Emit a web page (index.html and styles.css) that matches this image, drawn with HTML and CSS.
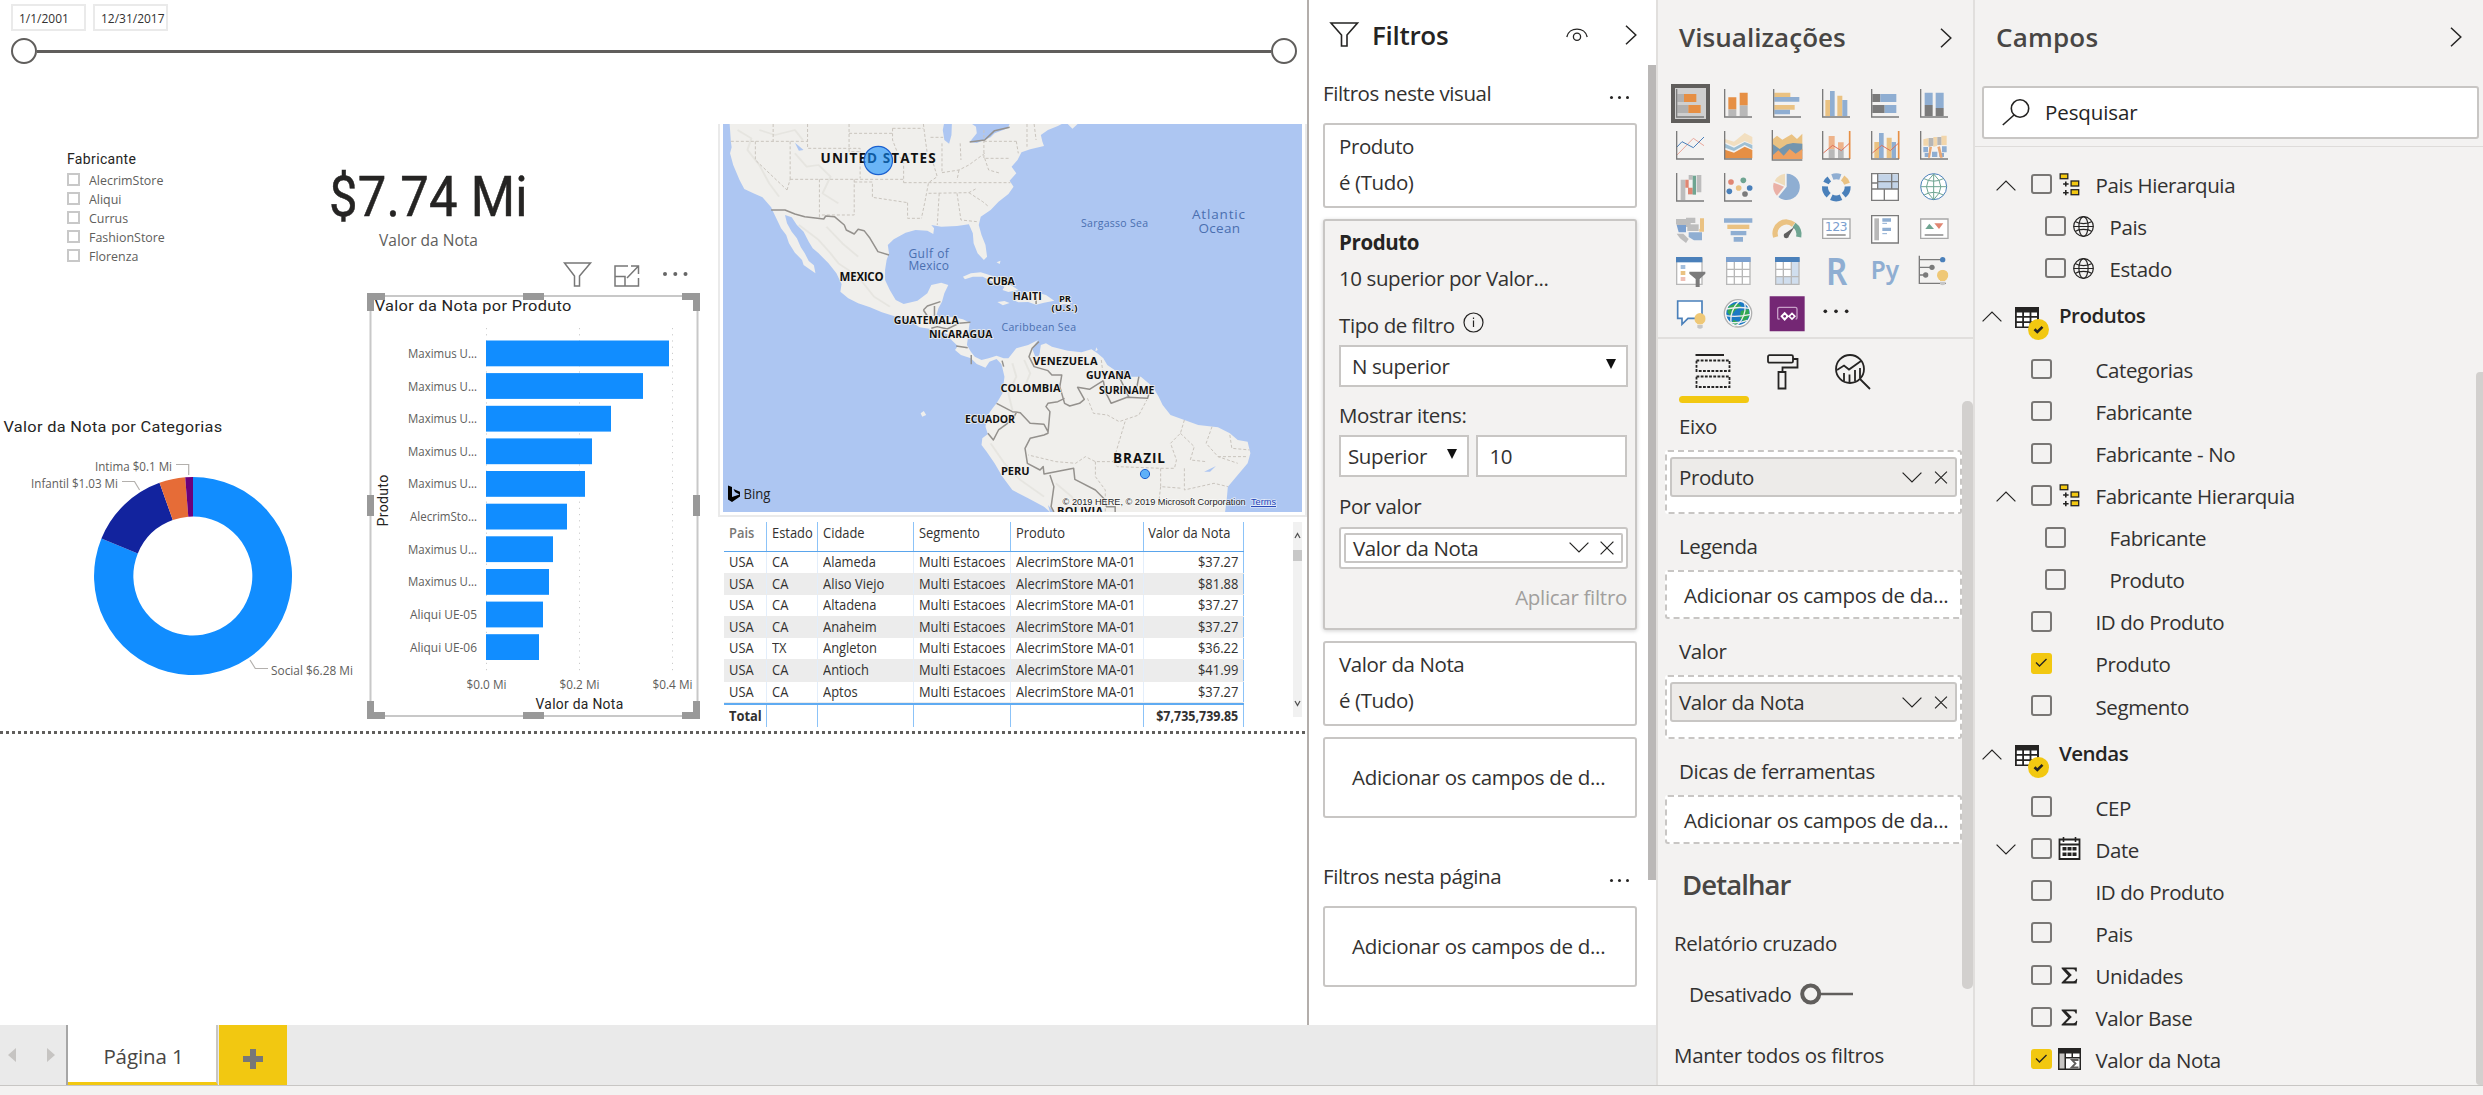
FILE: index.html
```html
<!DOCTYPE html>
<html lang="pt-BR">
<head>
<meta charset="utf-8">
<title>Relatório</title>
<link rel="stylesheet" href="styles.css">
</head>
<body>
<svg class="defs" width="0" height="0" aria-hidden="true">
  <symbol id="chev-right" viewBox="0 0 12 20"><path d="M1 .8 10.8 10 1 19.2" fill="none" stroke="#252423" stroke-width="1.5"/></symbol>
  <symbol id="chev-down" viewBox="0 0 20 11"><path d="M.6.6 10 10 19.400 .6" fill="none" stroke="#252423" stroke-width="1.2"/></symbol>
  <symbol id="chev-up" viewBox="0 0 20 11"><path d="M.6 10.400 10 1 19.400 10.400" fill="none" stroke="#252423" stroke-width="1.2"/></symbol>
  <symbol id="cross" viewBox="0 0 14 14"><path d="M.6.6 13.400 13.400M13.400.6.6 13.400" fill="none" stroke="#252423" stroke-width="1.2"/></symbol>
  <symbol id="tri" viewBox="0 0 10 10"><path d="M0 0H10L5 10Z" fill="#111"/></symbol>
  <symbol id="hier" viewBox="0 0 20 23">
    <g fill="#f2c811" stroke="#252423" stroke-width="1.300"><rect x=".7" y=".9" width="7.600" height="4.800"/><rect x="11.600" y="8" width="7.600" height="5"/><rect x="11.600" y="16.700" width="7.600" height="5"/></g>
    <path d="M3.600 11h5.500M6.300 8.400v5.200M3.600 19.700h5.500M6.300 17.100v5.200" stroke="#252423" stroke-width="1.600"/>
  </symbol>
  <symbol id="globe" viewBox="0 0 21 21"><g fill="none" stroke="#252423" stroke-width="1.200"><circle cx="10.500" cy="10.500" r="9.800"/><ellipse cx="10.500" cy="10.500" rx="4.600" ry="9.800"/><path d="M2 5.600c4 2.600 13 2.600 17 0M.8 10.500h19.400M2 15.400c4-2.600 13-2.600 17 0"/></g></symbol>
  <symbol id="sigma" viewBox="0 0 17 17"><path d="M.6.6H15.800V4.500L14.600 4.500C14.200 3 13.600 2.300 12 2.300H5.200L10.800 8 4.600 14.300H12.300C14 14.300 14.800 13.400 15.300 11.800L16.300 12 15.600 16.400H.6V15.400L7.200 8.700.6 1.600Z" fill="#252423"/></symbol>
  <symbol id="table" viewBox="0 0 24 21"><rect width="24" height="21" fill="#252423"/><g fill="#fff"><path d="M1.800 5.500h5.400v3.500h-5.400zM9 5.500h5.600v3.500h-5.600zM16.400 5.500h5.600v3.500h-5.600zM1.800 10.700h5.400v3.500h-5.400zM9 10.700h5.600v3.500h-5.600zM16.400 10.700h5.600v3.500h-5.600zM1.800 15.900h5.400v3.500h-5.400zM9 15.900h5.600v3.500h-5.600zM16.400 15.900h5.600v3.500h-5.600z"/></g></symbol>
  <symbol id="badge" viewBox="0 0 21 21"><circle cx="10.500" cy="10.500" r="10.500" fill="#f2c811"/><path d="M6.500 10.300 9.300 13 14.500 7.800" fill="none" stroke="#252423" stroke-width="2.600"/></symbol>
  <symbol id="bulb" viewBox="0 0 34 48"><circle cx="17" cy="17" r="17" fill="#efc876"/><path d="M9 30h16v4h-16z" fill="#efc876"/><path d="M9 36h16v8q-8 6-16 0z" fill="#c6c6c6"/></symbol>
</svg>

<div class="app">
  <div class="report">
    <main class="canvas">
      <div class="visual slicer-date">
        <div class="dates"><div class="date"><span class="cond">1/1/2001</span></div><div class="date"><span class="cond">12/31/2017</span></div></div>
        <div class="slider"><i class="knob"></i><i class="track"></i><i class="knob"></i></div>
      </div>

      <div class="visual slicer">
        <h4>Fabricante</h4>
        <label><i></i><span class="cond">AlecrimStore</span></label>
        <label><i></i><span class="cond">Aliqui</span></label>
        <label><i></i><span class="cond">Currus</span></label>
        <label><i></i><span class="cond">FashionStore</span></label>
        <label><i></i><span class="cond">Florenza</span></label>
      </div>

      <svg class="visual card-visual" viewBox="320 160 220 100" width="220" height="100">
        <text class="din big" x="329" y="216" textLength="199" lengthAdjust="spacingAndGlyphs">$7.74 Mi</text>
        <text class="lbl" x="379" y="246" font-size="15.500" textLength="99" lengthAdjust="spacingAndGlyphs">Valor da Nota</text>
      </svg>

      <svg class="visual donut" viewBox="0 410 366 300" width="366" height="300">
        <text class="din" x="3.500" y="432" font-size="15.500" textLength="219" lengthAdjust="spacingAndGlyphs">Valor da Nota por Categorias</text>
        <path d="M193 477A99 99 0 1 1 101.400 538.500L137.800 553.400A59.500 59.500 0 1 0 193 516.500Z" fill="#118dff"/>
        <path d="M101.400 538.500A99 99 0 0 1 159.500 482.800L172.800 520A59.500 59.500 0 0 0 137.800 553.400Z" fill="#12239e"/>
        <path d="M159.500 482.800A99 99 0 0 1 185.200 477.300L188.300 516.700A59.500 59.500 0 0 0 172.800 520Z" fill="#e66c37"/>
        <path d="M185.200 477.300A99 99 0 0 1 193 477V516.500A59.500 59.500 0 0 0 188.300 516.700Z" fill="#6b007b"/>
        <g fill="none" stroke="#b3b0ad" stroke-width="1.200"><path d="M176 464.500H188.700V475"/><path d="M122 481.500H134.500L139.600 490"/><path d="M250 660 255.300 668.500H268"/></g>
        <g class="lbl" font-size="12.500">
          <text x="95" y="471.300" textLength="77" lengthAdjust="spacingAndGlyphs">Intima $0.1 Mi</text>
          <text x="31" y="488.300" textLength="87" lengthAdjust="spacingAndGlyphs">Infantil $1.03 Mi</text>
          <text x="271" y="674.500" textLength="82" lengthAdjust="spacingAndGlyphs">Social $6.28 Mi</text>
        </g>
      </svg>

      <svg class="visual bars" viewBox="360 250 350 475" width="350" height="475">
        <g fill="none" stroke="#777" stroke-width="1.500">
          <path d="M564.500 263H590.500L579.500 276V286H574.500V276Z"/>
          <path d="M628 266H615V286H638.500V278M631 266H638.500V274M638 266.500 627 278M615 276.500H625V286"/>
        </g>
        <g fill="#666"><circle cx="665" cy="274" r="2"/><circle cx="675.300" cy="274" r="2"/><circle cx="685.500" cy="274" r="2"/></g>
        <rect x="370.500" y="296" width="327" height="420" fill="none" stroke="#c8c8c8" stroke-width="2"/>
        <text class="din" x="374.700" y="311" font-size="15.500" textLength="197" lengthAdjust="spacingAndGlyphs">Valor da Nota por Produto</text>
        <g fill="#999">
          <path d="M367 293H385V300H374V311H367ZM700 293H682V300H693V311H700ZM367 719H385V712H374V701H367ZM700 719H682V712H693V701H700Z"/>
          <rect x="523" y="293" width="21" height="7"/><rect x="523" y="712" width="21" height="7"/>
          <rect x="367" y="495" width="7" height="21"/><rect x="693" y="495" width="7" height="21"/>
        </g>
        <path d="M486.500 328V673M579.500 328V673M672.500 328V673" stroke="#ccc" stroke-dasharray="1.200 5" fill="none"/>
        <g fill="#118dff">
          <rect x="486" y="340.500" width="183" height="25.800"/><rect x="486" y="373.100" width="157" height="25.800"/>
          <rect x="486" y="405.800" width="125" height="25.800"/><rect x="486" y="438.400" width="106" height="25.800"/>
          <rect x="486" y="471" width="99" height="25.800"/><rect x="486" y="503.700" width="81" height="25.800"/>
          <rect x="486" y="536.300" width="67" height="25.800"/><rect x="486" y="569" width="63" height="25.800"/>
          <rect x="486" y="601.600" width="57" height="25.800"/><rect x="486" y="634.200" width="53" height="25.800"/>
        </g>
        <g class="lbl" font-size="12.500">
          <text x="408" y="358" textLength="69" lengthAdjust="spacingAndGlyphs">Maximus U...</text>
          <text x="408" y="390.500" textLength="69" lengthAdjust="spacingAndGlyphs">Maximus U...</text>
          <text x="408" y="423.200" textLength="69" lengthAdjust="spacingAndGlyphs">Maximus U...</text>
          <text x="408" y="456" textLength="69" lengthAdjust="spacingAndGlyphs">Maximus U...</text>
          <text x="408" y="488.400" textLength="69" lengthAdjust="spacingAndGlyphs">Maximus U...</text>
          <text x="410" y="521" textLength="67" lengthAdjust="spacingAndGlyphs">AlecrimSto...</text>
          <text x="408" y="553.600" textLength="69" lengthAdjust="spacingAndGlyphs">Maximus U...</text>
          <text x="408" y="586.300" textLength="69" lengthAdjust="spacingAndGlyphs">Maximus U...</text>
          <text x="410" y="619" textLength="67" lengthAdjust="spacingAndGlyphs">Aliqui UE-05</text>
          <text x="410" y="651.500" textLength="67" lengthAdjust="spacingAndGlyphs">Aliqui UE-06</text>
          <text x="466.500" y="689.300" textLength="40" lengthAdjust="spacingAndGlyphs">$0.0 Mi</text>
          <text x="559.500" y="689.300" textLength="40" lengthAdjust="spacingAndGlyphs">$0.2 Mi</text>
          <text x="652.500" y="689.300" textLength="40" lengthAdjust="spacingAndGlyphs">$0.4 Mi</text>
        </g>
        <text class="din" x="535.500" y="708.500" font-size="14" textLength="88" lengthAdjust="spacingAndGlyphs">Valor da Nota</text>
        <text class="din" transform="translate(388.400 526.500) rotate(-90)" font-size="14" textLength="52" lengthAdjust="spacingAndGlyphs">Produto</text>
      </svg>

      <div class="visual map">
      <svg viewBox="723 124 579 388" width="579" height="388">
        <rect x="723" y="124" width="579" height="388" fill="#adc6f2"/>
        <g transform="translate(700 110) scale(.3954 .3333)">
          <g fill="#f0efec">
            <path d="M75 42 78 94 80 112 76 130 84 165 100 210 112 237 135 250 158 262 180 292 185 305 195 330 205 355 218 375 225 400 240 428 258 450 262 465 280 480 292 490 288 466 275 453 265 430 255 412 245 385 232 365 220 340 215 315 232 322 245 345 262 365 275 395 285 415 300 430 325 460 345 490 358 522 355 545 375 565 400 580 430 592 460 607 490 618 510 622 535 635 555 652 580 656 605 665 625 672 636 690 652 708 645 720 660 735 685 745 700 762 722 773 732 755 750 747 762 762 765 775 770 800 765 850 750 880 740 895 725 920 722 950 728 972 714 985 712 1005 725 1025 745 1060 765 1100 790 1140 830 1165 870 1190 885 1206H1328L1332 1170 1335 1130 1360 1095 1385 1060 1392 1030 1385 995 1360 990 1340 970 1310 952 1260 945 1225 930 1190 915 1170 885 1160 860 1145 830 1115 800 1085 800 1055 785 1030 765 1020 745 1005 730 990 718 965 727 930 722 890 710 875 700 862 705 858 735 848 740 840 715 855 690 830 705 800 715 780 745 768 745 750 737 730 745 712 750 695 740 685 725 675 705 678 680 680 655 682 638 665 628 640 622 610 622 597 620 603 595 612 575 618 550 628 525 610 518 585 525 575 550 550 572 515 582 495 570 480 540 468 510 468 480 472 450 478 430 475 405 490 388 520 368 545 360 575 362 590 372 592 355 585 345 610 350 650 348 680 343 690 370 692 400 702 430 718 450 726 440 722 405 712 375 705 345 710 320 735 300 755 275 780 252 793 230 783 212 800 190 788 170 803 150 813 127 835 118 870 108 866 95 862 75 880 60 905 48 915 42ZM930 42H955L942 56Z"/>
            <path d="M665 500 685 490 710 487 740 498 765 512 790 528 805 540 780 546 765 540 770 530 745 518 715 500 690 500 670 508ZM790 568 812 566 818 545 850 547 875 555 896 572 870 578 850 584 830 576 805 577ZM752 576 770 573 783 579 766 586ZM910 575H936V583H910ZM750 457 760 452 758 462ZM1002 712 1006 720 1000 724ZM558 910 566 903 572 915 562 920Z"/>
          </g>
          <g fill="none" stroke="#e4e2dd" stroke-width="5" opacity=".8" stroke-linejoin="round">
            <path d="M95 60 130 85 120 120 150 165 175 220 200 260M150 60 190 75 240 60 260 90M240 130 270 170 300 165 330 200 310 250 350 280M250 345 300 390 330 430 350 460 400 500 440 560 480 590M320 350 360 400 400 440M790 760 800 800 780 850 790 900M735 1000 770 1060 810 1110 870 1160M820 750 835 790 815 850M900 1120 940 1160 960 1200"/>
          </g>
          <g fill="#adc6f2">
            <path d="M617 42H637L636 75 630 101 618 90 614 60ZM688 42H783L778 55 745 70 735 82 700 99 682 96 700 70 698 50ZM240 98 250 108 262 120 250 122ZM850 712 860 722 855 740 846 728ZM1275 1085 1305 1068 1290 1085ZM880 1185 895 1206H885Z"/>
          </g>
          <g fill="none" stroke="#c9c4bd" stroke-width="1" stroke-dasharray="3 2">
            <path vector-effect="non-scaling-stroke" d="M78 94H272M185 42V94M272 42V115H405V205M140 94V150L220 240M228 94V208M228 208H515M302 208V325M220 240 228 208M377 42V125H405M377 70H487M487 55H565M487 55V90L500 130 515 160V218M390 208V315H302M390 216H436V262L525 278M525 278V325H560M515 218H578M515 132H575L590 160 600 200 578 218 568 280 560 325M565 42 570 90 575 132M583 82H615M612 188 655 180 680 165 720 130M612 100V188M658 100 660 150M718 60V145H785M578 218H785M578 250 680 248 700 235M605 250 600 345M650 250 660 330 700 335M680 248 715 275 730 290M718 94H800M827 42V110M800 94 805 130M845 42 850 90M720 145 730 180 760 190M655 180 650 210"/>
            <path vector-effect="non-scaling-stroke" d="M980 865 995 910 1030 915 1060 935 1110 915 1130 870M1075 935 1045 1055H1000L975 1040 950 1060 900 1055 830 1035M1045 1055 1055 1070 1165 1075V1130L1220 1135M1225 930 1215 970 1190 1000 1205 1050 1200 1075 1165 1075M1215 970 1250 1010 1240 1050 1280 1055M1295 950 1280 1000 1310 1040 1360 1060M1310 1040 1385 1040M1000 1055V1100L1025 1140V1206M1165 1130 1160 1180M1340 975 1345 1015 1390 1020M1225 1075V1140L1300 1120 1335 1130M1015 750 1020 800"/>
          </g>
          <g fill="none" stroke="#94918d" stroke-width="1.500" stroke-linejoin="round">
            <path vector-effect="non-scaling-stroke" d="M180 300H215L240 312 265 320 313 327 318 318 340 320 365 345 370 360 390 372 400 358 415 362 430 385 450 425 478 435M682 96 720 90 745 62 783 52M565 600 575 588 608 575M593 588V618M565 600 575 618M585 655 600 650 625 657 655 640 684 637M648 708 677 713M686 735V763M764 752 768 770"/>
            <path vector-effect="non-scaling-stroke" d="M857 695 840 715 832 740 845 770 880 782 890 795H915L910 830 922 880 935 888 960 880 972 868 955 832 985 838 1020 812M1020 812 1025 845 1040 880 1080 862 1132 865 1140 835 1150 830M1060 800 1085 862M1110 800 1105 830M922 865 905 875 880 880 875 890 885 905 880 970 870 975M750 880 790 905 810 908 835 940 870 943 880 965M870 975 835 985 822 1015 828 1060 860 1080 868 1070 870 1092 945 1075 948 1108 1000 1140 1025 1170 1028 1190H1050V1206M728 970 742 990 755 960 790 930 800 908M885 1095 895 1130 888 1190 895 1206M850 560V582"/>
          </g>
        </g>
        <g class="sea">
          <text x="908.400" y="258" font-size="12" textLength="41">Gulf of</text><text x="908.400" y="270" font-size="12" textLength="41">Mexico</text>
          <text x="1081" y="227" font-size="10.500" textLength="67.500">Sargasso Sea</text>
          <text x="1192" y="219" font-size="13.500" textLength="53.500">Atlantic</text><text x="1198.500" y="233.300" font-size="13.500" textLength="42">Ocean</text>
          <text x="1001.500" y="331" font-size="10.500" textLength="75">Caribbean Sea</text>
        </g>
        <g class="land">
          <text x="820.600" y="162.700" font-size="13.500" textLength="115">UNITED STATES</text>
          <text x="839.600" y="281.300" font-size="11.500" textLength="44">MEXICO</text>
          <text x="986.700" y="285.300" font-size="10.500" textLength="28">CUBA</text>
          <text x="1012.800" y="300" font-size="10.500" textLength="29">HAITI</text>
          <text x="1059" y="301.700" font-size="9.500" textLength="12">PR</text>
          <text x="1051.500" y="311" font-size="9.500" textLength="26">(U.S.)</text>
          <text x="893.800" y="324" font-size="10.500" textLength="65">GUATEMALA</text>
          <text x="929" y="338.300" font-size="10.500" textLength="63.500">NICARAGUA</text>
          <text x="1033" y="365" font-size="11" textLength="64.500">VENEZUELA</text>
          <text x="1086" y="379.300" font-size="10.500" textLength="45">GUYANA</text>
          <text x="1099" y="393.500" font-size="10.500" textLength="55.500">SURINAME</text>
          <text x="1000.500" y="391.500" font-size="11" textLength="60">COLOMBIA</text>
          <text x="965" y="422.500" font-size="10.500" textLength="50">ECUADOR</text>
          <text x="1001" y="475" font-size="11" textLength="28.500">PERU</text>
          <text x="1113" y="463.300" font-size="13.500" textLength="52">BRAZIL</text>
          <text x="1057" y="514.500" font-size="11" textLength="46">BOLIVIA</text>
        </g>
        <circle cx="878.300" cy="160.500" r="14.200" fill="#118dff" fill-opacity=".6" stroke="#1b60cf" stroke-width="1.200"/>
        <circle cx="1145" cy="474" r="4.600" fill="#118dff" fill-opacity=".65" stroke="#1b60cf"/>
        <path d="M728 485.500 732 487V497L739.500 494.500 735 492 733.500 489 740 491.800V496.500L732 502 728 499.500Z" fill="#000"/>
        <text x="743.500" y="498.800" class="bing" textLength="27" lengthAdjust="spacingAndGlyphs">Bing</text>
        <text class="copy" x="1062.600" y="505" textLength="183" lengthAdjust="spacingAndGlyphs">© 2019 HERE, © 2019 Microsoft Corporation</text>
        <text class="copy terms" x="1251" y="505" textLength="25" lengthAdjust="spacingAndGlyphs">Terms</text>
      </svg>
      </div>

      <div class="visual grid">
        <div class="tbl">
          <div class="tr th"><b><span class="cond dim">Pais</span></b><b><span class="cond">Estado</span></b><b><span class="cond">Cidade</span></b><b><span class="cond">Segmento</span></b><b><span class="cond">Produto</span></b><b><span class="cond">Valor da Nota</span></b></div>
          <div class="tr"><b><span class="cond">USA</span></b><b><span class="cond">CA</span></b><b><span class="cond">Alameda</span></b><b><span class="cond">Multi Estacoes</span></b><b><span class="cond">AlecrimStore MA-01</span></b><b><span class="cond">$37.27</span></b></div>
          <div class="tr"><b><span class="cond">USA</span></b><b><span class="cond">CA</span></b><b><span class="cond">Aliso Viejo</span></b><b><span class="cond">Multi Estacoes</span></b><b><span class="cond">AlecrimStore MA-01</span></b><b><span class="cond">$81.88</span></b></div>
          <div class="tr"><b><span class="cond">USA</span></b><b><span class="cond">CA</span></b><b><span class="cond">Altadena</span></b><b><span class="cond">Multi Estacoes</span></b><b><span class="cond">AlecrimStore MA-01</span></b><b><span class="cond">$37.27</span></b></div>
          <div class="tr"><b><span class="cond">USA</span></b><b><span class="cond">CA</span></b><b><span class="cond">Anaheim</span></b><b><span class="cond">Multi Estacoes</span></b><b><span class="cond">AlecrimStore MA-01</span></b><b><span class="cond">$37.27</span></b></div>
          <div class="tr"><b><span class="cond">USA</span></b><b><span class="cond">TX</span></b><b><span class="cond">Angleton</span></b><b><span class="cond">Multi Estacoes</span></b><b><span class="cond">AlecrimStore MA-01</span></b><b><span class="cond">$36.22</span></b></div>
          <div class="tr"><b><span class="cond">USA</span></b><b><span class="cond">CA</span></b><b><span class="cond">Antioch</span></b><b><span class="cond">Multi Estacoes</span></b><b><span class="cond">AlecrimStore MA-01</span></b><b><span class="cond">$41.99</span></b></div>
          <div class="tr"><b><span class="cond">USA</span></b><b><span class="cond">CA</span></b><b><span class="cond">Aptos</span></b><b><span class="cond">Multi Estacoes</span></b><b><span class="cond">AlecrimStore MA-01</span></b><b><span class="cond">$37.27</span></b></div>
          <div class="tr total"><b><span class="cond">Total</span></b><b></b><b></b><b></b><b></b><b><span class="cond">$7,735,739.85</span></b></div>
        </div>
        <svg class="tscroll" width="9" height="195" viewBox="0 0 9 195"><rect width="9" height="195" fill="#f1f1f1"/><rect y="28" width="9" height="11" fill="#c8c8c8"/><path d="M2 16 4.500 11.500 7 16M2 179 4.500 183.500 7 179" fill="none" stroke="#555" stroke-width="1.300"/></svg>
      </div>
      <div class="visual page-edge"></div>
    </main>

    <aside class="filters">
      <header>
        <svg width="29" height="25" viewBox="0 0 29 25"><path d="M1 1H27.500L17 13V24H11.500V13Z" fill="none" stroke="#252423" stroke-width="1.600"/></svg>
        <h2>Filtros</h2>
        <svg class="eye" width="22" height="14" viewBox="0 0 22 14"><path d="M.8 9C3 -1.500 19 -1.500 21.200 9" fill="none" stroke="#252423" stroke-width="1.300"/><circle cx="11" cy="8.800" r="3.600" fill="none" stroke="#252423" stroke-width="1.300"/></svg>
        <svg width="12" height="20"><use href="#chev-right"/></svg>
      </header>
      <div class="sec"><span>Filtros neste visual</span><i class="dots"></i></div>
      <div class="fcard"><p>Produto</p><p>é (Tudo)</p></div>
      <div class="fcard open">
        <p class="strong">Produto</p><p>10 superior por Valor...</p>
        <p class="gap">Tipo de filtro <svg class="info" width="21" height="21" viewBox="0 0 21 21"><circle cx="10.500" cy="10.500" r="9.500" fill="none" stroke="#252423" stroke-width="1.200"/><path d="M10.500 8.500V15M10.500 5.500V7" stroke="#252423" stroke-width="1.200"/></svg></p>
        <div class="field"><span>N superior</span><svg width="10" height="10"><use href="#tri"/></svg></div>
        <p class="gap">Mostrar itens:</p>
        <div class="pair"><div class="field sm"><span>Superior</span><svg width="10" height="10"><use href="#tri"/></svg></div><div class="field num"><span>10</span></div></div>
        <p class="gap">Por valor</p>
        <div class="field well2"><div class="inner"><span>Valor da Nota</span><svg width="20" height="11"><use href="#chev-down"/></svg><svg width="14" height="14"><use href="#cross"/></svg></div></div>
        <p class="gap apply">Aplicar filtro</p>
      </div>
      <div class="fcard"><p>Valor da Nota</p><p>é (Tudo)</p></div>
      <div class="fcard drop">Adicionar os campos de d...</div>
      <div class="sec second"><span>Filtros nesta página</span><i class="dots"></i></div>
      <div class="fcard drop">Adicionar os campos de d...</div>
      <i class="fscroll"></i>
    </aside>

    <nav class="tabs">
      <div class="arrows"><svg width="48" height="14" viewBox="0 0 48 14"><path d="M8 0V14L0 7ZM39 0V14L47 7Z" fill="#c6c4c2"/></svg></div>
      <div class="tab">Página 1</div>
      <div class="plus"><svg width="20" height="20" viewBox="0 0 20 20"><path d="M10 0V20M0 10H20" stroke="#777" stroke-width="6"/></svg></div>
    </nav>
  </div>

  <aside class="viz">
    <header><h2>Visualizações</h2><svg width="12" height="20"><use href="#chev-right"/></svg></header>
    <div class="icons">
      <svg class="sel" viewBox="0 0 87 87"><path d="M4 15h20v24h-20zM4 48h33v24h-33z" fill="#b0b0b0"/><path d="M24 15h37v24h-37zM37 48h37v24h-37z" fill="#e68f44"/><path class="ax" d="M2 0V84H84"/></svg>
      <svg viewBox="0 0 87 87"><path d="M13 61h24v20h-24zM47 49h24v32h-24z" fill="#b8b8b8"/><path d="M13 25h24v36h-24zM47 11h24v38h-24z" fill="#e68f44"/><path class="ax" d="M2 0V84H84"/></svg>
      <svg viewBox="0 0 87 87"><path d="M4 11h48v13h-48zM4 48h61v14h-61z" fill="#eac282"/><path d="M4 24h75v14h-75zM4 62h47v14h-47z" fill="#8faed2"/><path class="ax" d="M2 0V84H84"/></svg>
      <svg viewBox="0 0 87 87"><path d="M10 33h14v48h-14zM46 20h15v61h-15z" fill="#eac282"/><path d="M24 6h14v75h-14zM61 33h15v48h-15z" fill="#8faed2"/><path class="ax" d="M2 0V84H84"/></svg>
      <svg viewBox="0 0 87 87"><path d="M4 15h24v24h-24zM4 48h37v24h-37z" fill="#7b7b7b"/><path d="M28 15h48v24h-48zM41 48h35v24h-35z" fill="#8faed2"/><path class="ax" d="M2 0V84H84"/></svg>
      <svg viewBox="0 0 87 87"><path d="M14 11h24v37h-24zM47 11h24v46h-24z" fill="#8faed2"/><path d="M14 48h24v33h-24zM47 57h24v24h-24z" fill="#7b7b7b"/><path class="ax" d="M2 0V84H84"/></svg>

      <svg viewBox="0 0 87 87"><path d="M3 72 52 22 84 44" fill="none" stroke="#eaa79b" stroke-width="3"/><path d="M3 48 18 32 52 50 84 18" fill="none" stroke="#4a80ba" stroke-width="3"/><path class="ax" d="M2 0V84H84"/></svg>
      <svg viewBox="0 0 87 87"><path d="M3 24 30 32 62 6 85 18V40L62 30 30 46 3 34Z" fill="#f2dfc0"/><path d="M3 38 30 50 62 33 85 42V54L62 42 30 60 3 50Z" fill="#9fc0d4"/><path d="M3 56 30 65 62 47 85 57V82H3Z" fill="#e68f44"/><path class="ax" d="M2 0V84H84"/></svg>
      <svg viewBox="0 0 87 87"><path d="M0 24 12 14 28 26 56 10 72 24 88 8V60H0Z" fill="#eac282"/><path d="M0 40 20 54 42 40 60 36 88 38V84H0Z" fill="#7395ae"/><path d="M0 72 16 58 32 74 50 54 68 68 88 54V84H0Z" fill="#efa05f"/><path class="ax" d="M-2 -3V87H88"/></svg>
      <svg viewBox="0 0 87 87"><path d="M20 15h18v40h-18zM48 34h17v20h-17z" fill="#eeb38a"/><path d="M20 55h18v27h-18zM48 54h17v28h-17z" fill="#b8b8b8"/><path d="M83 0V84" stroke="#e68f44" stroke-width="5"/><path d="M4 66 32 43 58 59 83 36" fill="none" stroke="#e0705a" stroke-width="3"/><path class="ax" d="M2 0V84H84"/></svg>
      <svg viewBox="0 0 87 87"><path d="M10 33h14v48h-14zM47 20h15v61h-15z" fill="#eac282"/><path d="M24 6h14v75h-14zM62 33h13v48h-13z" fill="#8faed2"/><path d="M83 0V84" stroke="#e68f44" stroke-width="5"/><path d="M4 66 32 43 58 59 83 36" fill="none" stroke="#e0705a" stroke-width="3"/><path class="ax" d="M2 0V84H84"/></svg>
      <svg viewBox="0 0 87 87"><path d="M10 25 26 21V44H10ZM40 18H52V44L40 48ZM64 14H80V42H64Z" fill="#f2d6ab"/><path d="M26 21H40V44L26 48ZM52 18H64V42H52Z" fill="#b5b5b5"/><path d="M10 48H24V64H10ZM66 46H80V64H66ZM36 62H52V78H36ZM14 66H28V78H14ZM58 66H72V78H58Z" fill="#8faed2"/><path d="M28 48 36 48 30 80 24 80ZM52 48 60 46 68 80 60 80Z" fill="#e9a672"/><path class="ax" d="M2 0V84H84"/></svg>

      <svg viewBox="0 0 87 87"><path d="M14 20h14v61h-14zM38 6h12v14h-12zM62 6h14v52h-14zM36 50h14v14h-14z" fill="#bdbdbd"/><path d="M28 20h10v24h-10zM36 44h14v20h-14z" fill="#e08672"/><path d="M50 8h10v57h-10z" fill="#6fa592"/><path class="ax" d="M2 0V84H84"/></svg>
      <svg viewBox="0 0 87 87"><circle cx="21" cy="27" r="8.500" fill="#e08672"/><circle cx="58" cy="22" r="8.500" fill="#6fa592"/><circle cx="44" cy="45" r="8.500" fill="#eac282"/><circle cx="77" cy="45" r="8.500" fill="#4a80ba"/><circle cx="16" cy="55" r="8.500" fill="#4a80ba"/><circle cx="63" cy="63" r="8.500" fill="#7b7b7b"/><path class="ax" d="M2 0V84H84"/></svg>
      <svg viewBox="0 0 87 87"><path d="M41 41V2A39.500 39.500 0 1 1 16 72Z" fill="#8faed2"/><path d="M36 38V2A40 40 0 0 0 5 24Z" fill="#efdcbb"/><path d="M33 41 2 29A42 42 0 0 0 12 68Z" fill="#eab1a7"/></svg>
      <svg viewBox="0 0 87 87" fill="none" stroke-width="18"><path d="M31 12A34 34 0 0 1 55 12" stroke="#8faed2"/><path d="M62 15A34 34 0 0 1 75 32" stroke="#eac282"/><path d="M77 40A34 34 0 0 1 65 67M57 73A34 34 0 0 1 28 73M20 67A34 34 0 0 1 9 40M12 30A34 34 0 0 1 22 18" stroke="#4a80ba"/></svg>
      <svg viewBox="0 0 87 87"><path d="M2 2H82V82H2Z" fill="#fff" stroke="#7b7b7b" stroke-width="4"/><path d="M21 4H81V48H21Z" fill="#c3d4e8"/><path d="M2 48H82M20 2V48M2 30H20M20 26H82M62 2V48M40 48V82" fill="none" stroke="#7b7b7b" stroke-width="4"/></svg>
      <svg viewBox="0 0 87 87" fill="none" stroke-width="3"><circle cx="41" cy="41" r="39" fill="#fff" stroke="#4a80ba"/><path d="M41 3V80M3 41H80M12 17Q41 32 70 17M12 66Q41 50 70 66M41 3Q-2 41 41 80M41 3Q84 41 41 80" stroke="#6fa592"/></svg>

      <svg viewBox="0 0 87 87"><path d="M0 12H30V8H58V24H44V36H12L0 28Z" fill="#bdbdbd"/><path d="M2 30H30V52H8Z" fill="#7ba0cf"/><path d="M34 28H68V48H34Z" fill="#bdbdbd"/><path d="M38 52H78V76H54L38 66Z" fill="#8faed2"/><path d="M2 56H22L38 72 30 84 12 70Z" fill="#bdbdbd"/><path d="M72 10H84V50H72ZM70 42H78V50H70Z" fill="#eac282"/></svg>
      <svg viewBox="0 0 87 87"><path d="M0 10h85v13h-85zM20 48h47v13h-47zM29 66h28v14h-28z" fill="#8faed2"/><path d="M10 29h66v13h-66z" fill="#eac282"/></svg>
      <svg viewBox="0 0 87 87"><path d="M8 66A34 34 0 0 1 62 29" fill="none" stroke="#eac282" stroke-width="16"/><path d="M63 30A34 34 0 0 1 77 66" fill="none" stroke="#6fa592" stroke-width="16"/><path d="M64 36 48 62A8 8 0 1 1 38 54Z" fill="#5f5f5f"/></svg>
      <svg viewBox="0 0 87 87"><path d="M2 12H84V70H2Z" fill="#fff" stroke="#a8a8a8" stroke-width="4"/><text x="8" y="48" textLength="69" class="n123">123</text><path d="M14 60H71" stroke="#7b7b7b" stroke-width="4"/></svg>
      <svg viewBox="0 0 87 87"><path d="M2 2H82V84H2Z" fill="#fff" stroke="#7b7b7b" stroke-width="4"/><path d="M10 10h14v66h-14z" fill="#b8b8b8"/><path d="M34 10h26v10h-26zM34 38h26v10h-26z" fill="#8faed2"/><path d="M34 25h14M34 56h14" stroke="#8faed2" stroke-width="3"/></svg>
      <svg viewBox="0 0 87 87"><path d="M2 12H84V70H2Z" fill="#fff" stroke="#a8a8a8" stroke-width="4"/><path d="M16 42 28 26 42 42Z" fill="#6fa592"/><path d="M43 25H70L57 42Z" fill="#e08672"/><path d="M14 60H70" stroke="#7b7b7b" stroke-width="4"/></svg>

      <svg viewBox="0 0 87 87"><path d="M2 6H78V82H2Z" fill="#fff" stroke="#b8b8b8" stroke-width="4"/><path d="M0 0H79V16H0Z" fill="#4a80ba"/><path d="M14 24h14v12h-14z" fill="#a4bfdc"/><path d="M14 42h14v12h-14z" fill="#eac282"/><path d="M14 60h14v12h-14z" fill="#efc0b6"/><path d="M40 44H88V50L71 66V90H59V66L40 50Z" fill="#7b7b7b"/></svg>
      <svg viewBox="0 0 87 87"><path d="M8 6H78V82H8Z" fill="#fff" stroke="#b8b8b8" stroke-width="4"/><path d="M31 14V82M55 14V82M8 37H78M8 59H78" stroke="#b8b8b8" stroke-width="4"/><path d="M6 0H80V15H6Z" fill="#7ba0cf"/></svg>
      <svg viewBox="0 0 87 87"><path d="M8 6H78V82H8Z" fill="#fff"/><path d="M55 14H78V82H8V60H55Z" fill="#d0deee"/><path d="M8 6H78V82H8ZM31 14V82M55 14V82M8 37H55M8 59H78" fill="none" stroke="#b8b8b8" stroke-width="4"/><path d="M6 0H80V15H6Z" fill="#4a80ba"/></svg>
      <svg viewBox="0 0 87 87"><text x="12" y="84" class="rr" font-size="112" textLength="64" lengthAdjust="spacingAndGlyphs">R</text></svg>
      <svg viewBox="0 0 87 87"><text x="-1" y="66" class="rr" font-size="76" textLength="85" lengthAdjust="spacingAndGlyphs">Py</text></svg>
      <svg viewBox="0 0 87 87"><path d="M-2 -4V79H78M-2 8H66M-2 31H36M-2 54H20" fill="none" stroke="#7b7b7b" stroke-width="4"/><circle cx="68" cy="8" r="8" fill="#4a80ba"/><circle cx="36" cy="31" r="8" fill="#7b7b7b"/><circle cx="17" cy="54" r="8" fill="#7b7b7b"/><use href="#bulb" x="51" y="38" width="34" height="48"/></svg>

      <svg viewBox="0 0 87 87"><path d="M5 6H78V58H36L18 76V58H5Z" fill="#fff" stroke="#4a80ba" stroke-width="5"/><use href="#bulb" x="55" y="42" width="34" height="48"/></svg>
      <svg viewBox="0 0 87 87"><circle cx="42" cy="43" r="41" fill="#fff" stroke="#b0b0b0" stroke-width="4"/><circle cx="42" cy="43" r="35" fill="#1b79c4"/><path d="M14 22 40 12 52 22 34 34 20 52 10 40ZM50 36 74 30 76 50 62 70 48 58ZM28 62 44 70 36 78 24 72Z" fill="#32a852"/><g fill="none" stroke="#eee" stroke-width="4"><ellipse cx="42" cy="43" rx="18" ry="39" transform="rotate(20 42 43)"/><path d="M6 30Q44 22 76 28M4 50Q40 56 80 46M14 70Q46 74 70 64"/></g></svg>
      <svg viewBox="0 0 87 87"><path d="M-10 -8H95V97H-10Z" fill="#742774"/><path d="M20 60H16Q14 60 14 56V30Q14 25 19 25H67Q72 25 72 30V56Q72 60 68 60" fill="none" stroke="#c79fc7" stroke-width="4"/><path d="M35 38 48 52 35 66 22 52ZM57 40 69 52 57 64 45 52Z" fill="#fff"/><circle cx="35" cy="52" r="4" fill="#742774"/><circle cx="57" cy="52" r="4" fill="#742774"/></svg>
      <svg viewBox="0 0 87 87" fill="#252423"><circle cx="10" cy="37" r="5.500"/><circle cx="42" cy="37" r="5.500"/><circle cx="74" cy="37" r="5.500"/></svg>
    </div>
    <div class="modes">
      <svg width="36" height="35" viewBox="0 0 36 35" fill="none" stroke="#252423"><path d="M.5 1H29" stroke-width="2"/><path d="M1.500 6.500H34.500V17H1.500ZM1.500 22.500H34.500V33H1.500Z" stroke-width="1.800" stroke-dasharray="2.800 1.400"/></svg>
      <svg width="32" height="36" viewBox="0 0 32 36" fill="none" stroke="#252423" stroke-width="1.800"><rect x="1" y="1.200" width="25" height="7.500" rx="1.500"/><path d="M26 5H30.500V13.500H15.500V18M11.500 18H18.500V34.500H11.500Z"/></svg>
      <svg width="36" height="36" viewBox="0 0 36 36" fill="none" stroke="#252423" stroke-width="1.800"><circle cx="15" cy="15" r="14"/><path d="M25 25 35 35M2 16 9 11.500 14 15.500 26 7M9 19V27M14.500 20.500V29M20 16V27.500M25 14V24"/></svg>
    </div>
    <div class="wells">
      <label>Eixo</label>
      <div class="well full"><div class="chip"><span>Produto</span><svg width="20" height="11"><use href="#chev-down"/></svg><svg width="14" height="13"><use href="#cross"/></svg></div></div>
      <label>Legenda</label>
      <div class="well">Adicionar os campos de da...</div>
      <label>Valor</label>
      <div class="well full"><div class="chip"><span>Valor da Nota</span><svg width="20" height="11"><use href="#chev-down"/></svg><svg width="14" height="13"><use href="#cross"/></svg></div></div>
      <label>Dicas de ferramentas</label>
      <div class="well">Adicionar os campos de da...</div>
      <h3>Detalhar</h3>
      <p class="opt">Relatório cruzado</p>
      <p class="toggle">Desativado <svg width="54" height="22" viewBox="0 0 54 22"><circle cx="10.700" cy="11" r="8.500" fill="none" stroke="#605e5c" stroke-width="4"/><path d="M20 11H53" stroke="#605e5c" stroke-width="2.500"/></svg></p>
      <p class="opt last">Manter todos os filtros</p>
    </div>
    <i class="vscroll"></i>
  </aside>

  <aside class="fields">
    <header><h2>Campos</h2><svg width="12" height="20"><use href="#chev-right"/></svg></header>
    <div class="search"><svg width="28" height="27" viewBox="0 0 28 27" fill="none" stroke="#252423" stroke-width="1.600"><circle cx="18" cy="9.500" r="8.700"/><path d="M12 16 .8 26"/></svg><span>Pesquisar</span></div>
    <div class="tree">
      <div class="row"><svg class="arw" width="20" height="11"><use href="#chev-up"/></svg><i class="cb"></i><svg class="ico" width="20" height="23"><use href="#hier"/></svg><span>Pais Hierarquia</span></div>
      <div class="row in"><i class="arw"></i><i class="cb"></i><svg class="ico" width="21" height="21"><use href="#globe"/></svg><span>Pais</span></div>
      <div class="row in"><i class="arw"></i><i class="cb"></i><svg class="ico" width="21" height="21"><use href="#globe"/></svg><span>Estado</span></div>
      <div class="head"><svg width="20" height="11"><use href="#chev-up"/></svg><span class="tico"><svg width="24" height="21"><use href="#table"/></svg><svg class="bdg" width="21" height="21"><use href="#badge"/></svg></span><span>Produtos</span></div>
      <div class="row"><i class="arw"></i><i class="cb"></i><i class="ico"></i><span>Categorias</span></div>
      <div class="row"><i class="arw"></i><i class="cb"></i><i class="ico"></i><span>Fabricante</span></div>
      <div class="row"><i class="arw"></i><i class="cb"></i><i class="ico"></i><span>Fabricante - No</span></div>
      <div class="row"><svg class="arw" width="20" height="11"><use href="#chev-up"/></svg><i class="cb"></i><svg class="ico" width="20" height="23"><use href="#hier"/></svg><span>Fabricante Hierarquia</span></div>
      <div class="row in"><i class="arw"></i><i class="cb"></i><i class="ico"></i><span>Fabricante</span></div>
      <div class="row in"><i class="arw"></i><i class="cb"></i><i class="ico"></i><span>Produto</span></div>
      <div class="row"><i class="arw"></i><i class="cb"></i><i class="ico"></i><span>ID do Produto</span></div>
      <div class="row"><i class="arw"></i><i class="cb on"><svg width="21" height="20" viewBox="0 0 21 20"><path d="M5 9.500 8.500 13 15.500 6" fill="none" stroke="#252423" stroke-width="1.400"/></svg></i><i class="ico"></i><span>Produto</span></div>
      <div class="row"><i class="arw"></i><i class="cb"></i><i class="ico"></i><span>Segmento</span></div>
      <div class="head"><svg width="20" height="11"><use href="#chev-up"/></svg><span class="tico"><svg width="24" height="21"><use href="#table"/></svg><svg class="bdg" width="21" height="21"><use href="#badge"/></svg></span><span>Vendas</span></div>
      <div class="row"><i class="arw"></i><i class="cb"></i><i class="ico"></i><span>CEP</span></div>
      <div class="row"><svg class="arw" width="20" height="11"><use href="#chev-down"/></svg><i class="cb"></i><svg class="ico" width="22" height="23" viewBox="0 0 22 23"><path d="M1 2.500H21V22H1ZM1 7.500H21" fill="#fff" stroke="#252423" stroke-width="1.800"/><path d="M5 0V5M17 0V5" stroke="#252423" stroke-width="1.600"/><path d="M4 10h4v3.500h-4zM9 10h4v3.500h-4zM14 10h4v3.500h-4zM4 15.500h4v3.500h-4zM9 15.500h4v3.500h-4zM14 15.500h4v3.500h-4z" fill="#252423"/></svg><span>Date</span></div>
      <div class="row"><i class="arw"></i><i class="cb"></i><i class="ico"></i><span>ID do Produto</span></div>
      <div class="row"><i class="arw"></i><i class="cb"></i><i class="ico"></i><span>Pais</span></div>
      <div class="row"><i class="arw"></i><i class="cb"></i><svg class="ico sg" width="17" height="17"><use href="#sigma"/></svg><span>Unidades</span></div>
      <div class="row"><i class="arw"></i><i class="cb"></i><svg class="ico sg" width="17" height="17"><use href="#sigma"/></svg><span>Valor Base</span></div>
      <div class="row"><i class="arw"></i><i class="cb on"><svg width="21" height="20" viewBox="0 0 21 20"><path d="M5 9.500 8.500 13 15.500 6" fill="none" stroke="#252423" stroke-width="1.400"/></svg></i><svg class="ico" width="23" height="22" viewBox="0 0 23 22"><path d="M0 0H23V22H0Z" fill="#252423"/><path d="M1.500 5.500H6.500V20.500H1.500Z" fill="#c8c6c4"/><path d="M8 5.500H13.500V9H8ZM15 5.500H21.500V9H15ZM8 10.500H21.500V20.500H8Z" fill="#fff"/><path d="M20.500 12H14L17.500 15.500 13.500 19.500H20.500" fill="none" stroke="#605e5c" stroke-width="1.800"/></svg><span>Valor da Nota</span></div>
    </div>
    <i class="cscroll"></i>
  </aside>
</div>
<footer class="status"></footer>
</body>
</html>
```
FILE: styles.css
```css
* { box-sizing: border-box; }
html, body { margin: 0; padding: 0; }
body {
  width: 2483px; height: 1095px; overflow: hidden;
  font: 20.5px/36px "Open Sans", "Noto Sans", sans-serif;
  letter-spacing: -.4px; color: #323130; background: #f3f2f1;
}
h2, h3, h4, p { margin: 0; font-weight: inherit; font-size: inherit; }
svg { display: block; flex: none; overflow: visible; }
i { display: block; flex: none; }
.defs { position: absolute; }
.app { display: grid; grid-template-columns: 1656px 319px 508px; height: 1085px; }
.status { height: 10px; border-top: 1px solid #c8c6c4; background: #f3f2f1; }

/* report area */
.report { display: grid; grid-template-columns: 1307px 349px; grid-template-rows: 1025px 60px; background: #fff; }
.canvas { position: relative; overflow: hidden; letter-spacing: 0; }
.visual { position: absolute; }
.cond { display: inline-block; transform: scaleX(.87); transform-origin: 0 50%; white-space: nowrap; }
.din { font-family: Roboto, sans-serif; fill: #252423; letter-spacing: .3px; }
.big { font-size: 55px; stroke: #252423; stroke-width: .5px; }
.lbl { fill: #605e5c; }
.card-visual { left: 320px; top: 160px; }
.donut { left: 0; top: 410px; }
.bars { left: 360px; top: 250px; }

.slicer-date { left: 11px; top: 4px; width: 1286px; }
.dates { display: flex; gap: 7px; }
.date { width: 75px; height: 27px; border: 2px solid #eaeaea; padding-left: 6px; font-size: 13px; line-height: 24px; }
.date .cond { transform: scaleX(.92); }
.slider { display: flex; align-items: center; margin-top: 7px; }
.knob { width: 26px; height: 26px; border: 2.5px solid #605e5c; border-radius: 50%; background: #fff; }
.track { flex: 1; height: 3px; background: #605e5c; }

.slicer { left: 67px; top: 149px; width: 130px; }
.slicer h4 { font: 14px/20px Roboto, sans-serif; letter-spacing: .35px; color: #252423; margin-bottom: 2px; }
.slicer label { display: flex; align-items: center; gap: 9px; height: 19px; font-size: 13.5px; line-height: 19px; color: #605e5c; }
.slicer label .cond { transform: scaleX(.92); }
.slicer i { width: 13px; height: 13px; border: 2.500px solid #c8c8c8; margin-top: -2px; }

.map { left: 718px; top: 124px; width: 589px; height: 393px; border: 2px solid #eaeaea; border-top: 0; padding-left: 3px; }
.map svg { overflow: hidden; }
.sea { fill: #4a6fb0; letter-spacing: .5px; }
.land { fill: #111; font-weight: 700; stroke: #f0efec; stroke-width: 1.5px; paint-order: stroke; }
.bing { font-size: 14.5px; fill: #222; }
.copy { font: 9.500px "Liberation Sans", sans-serif; fill: #222; stroke: #fff; stroke-opacity: .6; stroke-width: 1.5px; paint-order: stroke; }
.terms { fill: #2243b6; text-decoration: underline; }

.grid { left: 724px; top: 522px; width: 578px; height: 204px; display: flex; justify-content: space-between; align-items: flex-start; font-size: 14.2px; }
.grid .cond { transform: scaleX(.91); }
.tbl { width: 520px; }
.tr { display: grid; grid-template-columns: 43px 51px 96px 97px 133px 100px; height: 21.6px; line-height: 20px; border-bottom: 1px solid #ececec; }
.tr:nth-child(odd):not(.th):not(.total) { background: #ececec; }
.tr b { font-weight: 400; padding-left: 5px; border-right: 1px solid #e3eefb; overflow: hidden; min-width: 0; white-space: nowrap; }
.tr b:nth-child(n+3) { padding-left: 5px; }
.tr b:last-child { text-align: right; padding: 0 5px 0 0; border-color: #8cc3f8; }
.tr b:last-child .cond { transform-origin: 100% 50%; }
.tr.th { height: 30px; line-height: 21px; border-bottom: 1.500px solid #5aa5ec; }
.th b, .total b, .total b:nth-child(n) { border-color: #8cc3f8; }
.tr.th b:last-child { padding-right: 13px; padding-left: 0; direction: rtl; text-align: right; display: flex; overflow: visible; }
.tr.total { border-top: 2px solid #5fabf2; border-bottom: 0; height: 22px; line-height: 22px; }
.total b { font-weight: 700; overflow: visible; }
.total b:last-child .cond { transform: scaleX(.88); margin-left: -20px; }
.dim { color: #797775; font-weight: 600; }
.page-edge { left: 0; top: 731px; width: 1306px; height: 3px; background: repeating-linear-gradient(90deg, #605e5c 0 3px, transparent 3px 6px); }

/* filters pane */
.filters { position: relative; border-left: 2px solid #b3aeab; padding: 0 19px 0 14px; }
.filters header { display: flex; align-items: center; height: 69px; padding-left: 7px; }
.filters header h2 { margin-left: 13px; flex: 1; letter-spacing: -.3px; }
h2 { font-size: 26px; font-weight: 600; letter-spacing: -.2px; color: #252423; }
.eye { margin-right: 37px; }
.sec { display: flex; align-items: center; justify-content: space-between; height: 36px; margin: 6px 8px 12px 0; }
.sec.second { margin-top: 40px; }
.dots { width: 3px; height: 3px; border-radius: 50%; background: #252423; box-shadow: -8px 0 #252423, -16px 0 #252423; margin-top: 8px; }
.fcard { height: 85px; width: 314px; border: 2px solid #c8c6c4; border-radius: 3px; background: #fff; padding: 3px 8px 0 14px; margin-bottom: 11px; }
.fcard.open { height: 411px; background: #f3f2f1; box-shadow: 0 1px 4px rgba(0,0,0,.18); }
.fcard.drop { height: 81px; padding: 20px 0 0 27px; white-space: nowrap; letter-spacing: -.3px; }
.strong { font-weight: 700; color: #252423; }
.gap { display: flex; margin-top: 10.500px; }
.info { margin: 5px 0 0 8px; }
.field { display: flex; justify-content: space-between; align-items: center; height: 42px; margin-top: 2px; padding: 0 10px 0 11px; border: 2px solid #c8c6c4; background: #fff; width: 289px; line-height: 38px; }
.field > svg { margin-top: -4px; }
.pair { display: flex; gap: 7px; }
.pair .sm { width: 130px; padding-left: 7px; }
.pair .num { width: 152px; padding-left: 12px; }
.field.well2 { padding: 3px; border-radius: 3px; margin-top: 3px; }
.inner { display: flex; align-items: center; flex: 1; height: 30px; border: 2px solid #c8c6c4; border-radius: 2px; padding: 0 7px; line-height: 26px; }
.inner span { flex: 1; }
.inner svg + svg { margin-left: 11px; }
.apply { justify-content: flex-end; color: #a19f9d; letter-spacing: -.3px; }
.fscroll { position: absolute; right: 0; top: 65px; width: 8px; height: 815px; background: #bab8b7; }

/* page tabs */
.tabs { grid-column: 1 / -1; display: flex; background: #eaeaea; }
.arrows { width: 68px; padding: 23px 0 0 8px; border-right: 2px solid #a6a6a6; }
.tab { width: 150px; background: #fff; border-bottom: 3px solid #f2c811; border-right: 2px solid #c8c6c4; padding-left: 3px; text-align: center; line-height: 62px; font-weight: 500; letter-spacing: -.1px; color: #484644; }
.plus { width: 68px; margin-left: 1px; background: #f2c811; display: flex; justify-content: center; padding-top: 24px; }

/* visualizations pane */
.viz { position: relative; background: #f3f2f1; border-left: 2px solid #e1dfdd; border-right: 2px solid #e1dfdd; overflow: hidden; }
.viz header, .fields header { display: flex; align-items: center; justify-content: space-between; height: 75px; padding: 0 21px; }
.viz header h2, .fields header h2 { color: #484644; line-height: 75px; }
.viz header h2 { letter-spacing: .05px; }
.icons { display: grid; grid-template-columns: repeat(6, 48.9px); grid-auto-rows: 42px; padding: 14px 0 0 17.500px; height: 264px; border-bottom: 2px solid #e1dfdd; }
.icons svg { width: 29px; height: 29px; }
.icons .sel { outline: 4px solid #605e5c; outline-offset: 1px; background: #cfcfcf; box-shadow: 0 0 0 1px #cfcfcf; }
.ax { fill: none; stroke: #7b7b7b; stroke-width: 4; }
.n123 { font: 38px "DejaVu Sans", sans-serif; fill: #7ba0cf; letter-spacing: 0; }
.rr { font-family: "Noto Sans", sans-serif; font-weight: 600; fill: #8faed2; letter-spacing: 0; }
.modes { display: flex; align-items: flex-start; height: 63px; padding: 15px 0 0 37px; gap: 36px; position: relative; }
.modes::after { content: ""; position: absolute; left: 21px; top: 57px; width: 70px; height: 7px; border-radius: 4px; background: #f2c811; }
.wells { padding: 6px 0 0 7px; }
.wells label { display: block; padding-left: 14px; height: 36px; margin-bottom: 6px; }
.well { width: 297px; height: 48.5px; margin-bottom: 14.500px; border: 2px dashed #c8c6c4; border-radius: 3px; background: #fff; padding-left: 17px; line-height: 46px; white-space: nowrap; letter-spacing: -.3px; }
.well.full { height: 64px; padding: 5px 3px; margin-bottom: 14px; letter-spacing: -.4px; }
.chip { display: flex; align-items: center; height: 40px; border: 2px solid #c8c6c4; border-radius: 3px; background: #edebe9; padding: 0 7px; line-height: 40px; }
.chip span { flex: 1; }
.chip svg + svg { margin-left: 12px; }
.wells h3 { font-size: 27.5px; font-weight: 600; color: #484644; letter-spacing: -.9px; padding-left: 17px; margin-top: 23px; }
.opt { padding-left: 9px; margin-top: 22px; letter-spacing: -.3px; }
.toggle { display: flex; align-items: center; padding-left: 24px; gap: 8px; margin-top: 15px; }
.opt.last { margin-top: 25px; }
.vscroll { position: absolute; right: 0; top: 401px; width: 11px; height: 588px; border-radius: 5px; background: #d2d0ce; }

/* fields pane */
.fields { position: relative; background: #f3f2f1; overflow: hidden; }
.fields header { height: 74px; }
.fields header h2 { line-height: 74px; letter-spacing: .2px; }
.search { display: flex; align-items: center; gap: 15px; width: 497px; height: 53px; margin: 12px 0 0 7px; border: 2px solid #c8c6c4; border-radius: 3px; background: #fff; padding-left: 18px; color: #252423; }
.search span { margin-top: -1px; letter-spacing: -.1px; }
.tree { border-top: 1px solid #dedcda; margin-top: 7px; padding-top: 17px; }
.row { display: flex; align-items: center; height: 42.05px; padding-left: 21px; }
.row.in { padding-left: 35px; }
.arw { width: 20px; }
.cb { width: 21px; height: 20.5px; border: 2px solid #797775; border-radius: 3px; margin: -2px 6px 0 15px; }
.cb.on { background: #f2c811; border: 0; }
.ico { margin-top: -2px; }
.row .ico { width: 23px; margin-right: 14.5px; }
.row svg.sg { width: 17px; margin: 0 17.5px 0 3px; }
.head { display: flex; height: 59px; padding: 8px 0 0 7px; }
.head > svg { margin: 13px 13px 0 0; }
.tico { position: relative; margin: 9px 20px 0 0; width: 24px; }
.bdg { position: absolute; left: 13px; top: 12px; }
.head > span:last-child { font-weight: 600; color: #252423; line-height: 35px; letter-spacing: -.5px; }
.cscroll { position: absolute; right: 0; top: 372px; width: 7px; height: 713px; background: #d2d0ce; border-radius: 4px 0 0 4px; }
```
